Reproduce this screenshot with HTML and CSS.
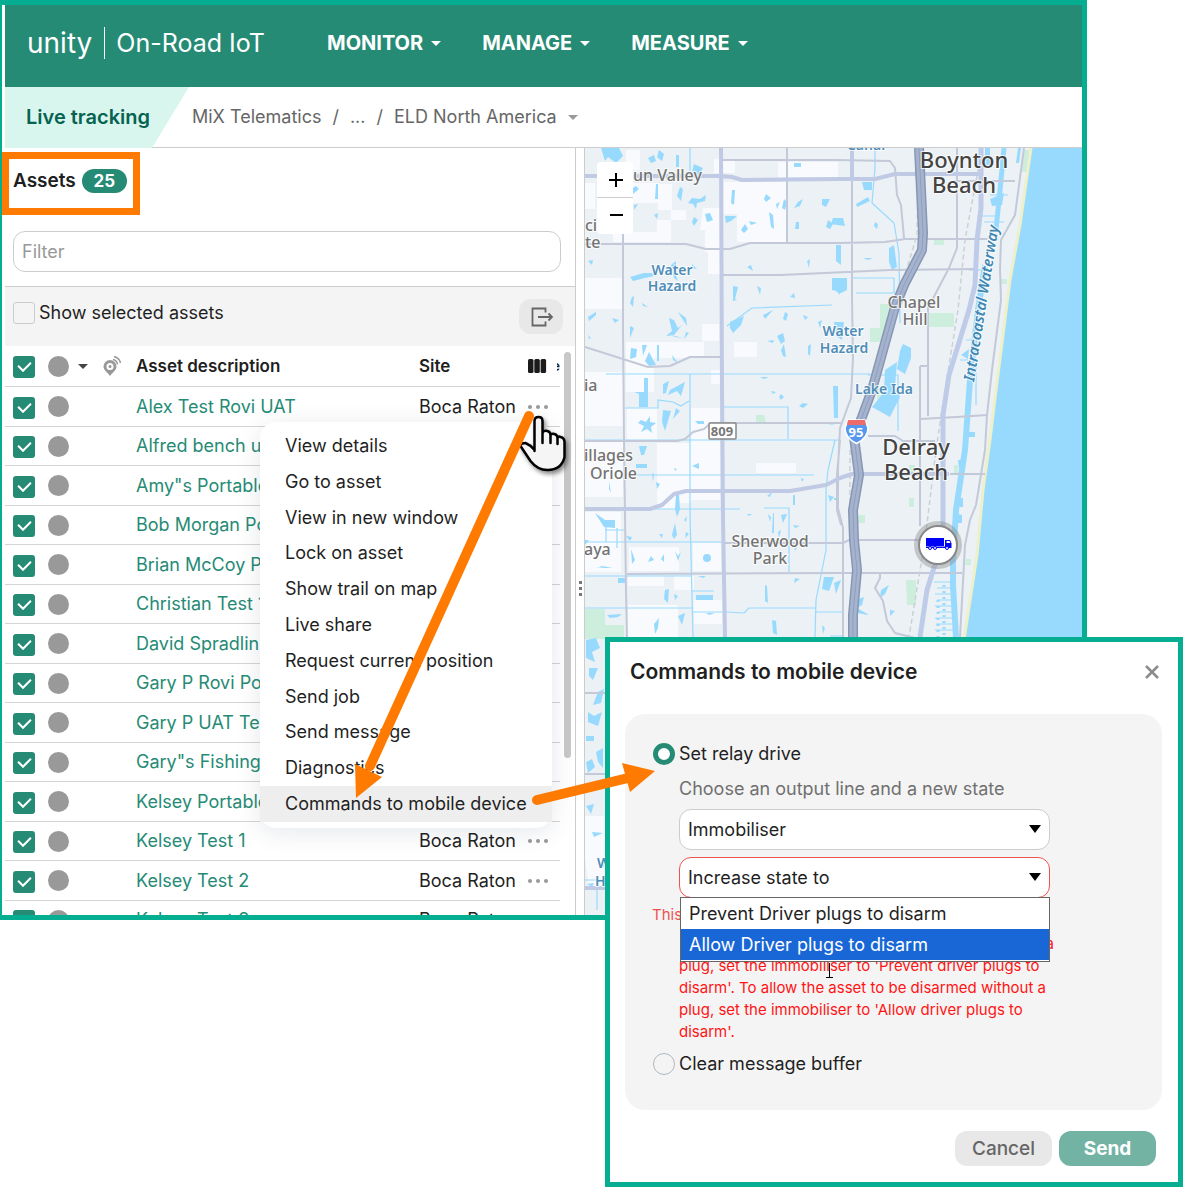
FILE: index.html
```html
<!DOCTYPE html>
<html lang="en">
<head>
<meta charset="utf-8">
<title>Live tracking</title>
<link rel="stylesheet" href="styles.css">
</head>
<body>
<div class="app">
  <header class="topbar">
    <div class="brand"><span class="brand-name">unity</span><span class="brand-product">On-Road IoT</span></div>
    <nav class="main-nav">
      <button type="button">MONITOR<i class="caret"></i></button>
      <button type="button">MANAGE<i class="caret"></i></button>
      <button type="button">MEASURE<i class="caret"></i></button>
    </nav>
  </header>
  <div class="crumb-bar">
    <h1 class="page-tab">Live tracking</h1>
    <nav class="crumbs"><a href="#">MiX Telematics</a><span>/</span><a href="#">...</a><span>/</span><a href="#">ELD North America</a><i class="caret"></i></nav>
  </div>
  <main class="workspace">
    <section class="assets">
      <div class="assets-head"><h2>Assets</h2><span class="count">25</span></div>
      <div class="filter-row"><input class="filter" type="text" placeholder="Filter" aria-label="Filter"></div>
      <div class="toolbar">
        <label><input class="check" type="checkbox">Show selected assets</label>
        <button class="export" type="button" aria-label="Export">
          <svg width="24" height="20" viewBox="0 0 24 20" fill="none" stroke="#666" stroke-width="1.8"><path d="M16.500 5.500V1.500H3.500v17H16.500V14.500M9 10H23M19.500 6.500L23 10l-3.500 3.500"/></svg>
        </button>
      </div>
      <div class="list">
        <table>
          <colgroup><col class="c-check"><col class="c-status"><col class="c-name"><col class="c-site"><col class="c-more"></colgroup>
          <thead>
            <tr>
              <th><input class="check" type="checkbox" checked aria-label="Select all"></th>
              <th><div class="status-head"><i class="dot"></i><i class="caret"></i>
                <svg width="20" height="22" viewBox="0 0 20 22"><path fill="#999" fill-rule="evenodd" d="M8 5a6.500 6.500 0 0 0-6.500 6.500C1.500 15 5 17 8 21c3-4 6.500-6 6.500-9.500A6.500 6.500 0 0 0 8 5zm0 3a3.500 3.500 0 1 1 0 7 3.500 3.500 0 0 1 0-7z"/><circle cx="8" cy="11.500" r="1.500" fill="#999"/><path fill="none" stroke="#999" stroke-width="1.500" d="M11 4.500q4 1 4.500 5M12 1.500q5.500 1.500 6.500 6.500"/></svg></div></th>
              <th>Asset description</th>
              <th>Site</th>
              <th><div class="cols"><svg width="20" height="16" viewBox="0 0 20 16" fill="#1b1b1b"><rect x="1" y="1" width="5.500" height="14" rx="1.500"/><rect x="7.300" y="1" width="5.500" height="14" rx="1.500"/><rect x="13.600" y="1" width="5.500" height="14" rx="1.500"/></svg><span class="cut">e</span></div></th>
            </tr>
          </thead>
          <tbody>
            <tr><td><input class="check" type="checkbox" checked aria-label="Select"></td><td><i class="dot"></i></td><td><a href="#">Alex Test Rovi UAT</a></td><td>Boca Raton</td><td><button class="more" type="button" aria-label="More"></button></td></tr>
            <tr><td><input class="check" type="checkbox" checked aria-label="Select"></td><td><i class="dot"></i></td><td><a href="#">Alfred bench u</a></td><td></td><td></td></tr>
            <tr><td><input class="check" type="checkbox" checked aria-label="Select"></td><td><i class="dot"></i></td><td><a href="#">Amy"s Portable</a></td><td></td><td></td></tr>
            <tr><td><input class="check" type="checkbox" checked aria-label="Select"></td><td><i class="dot"></i></td><td><a href="#">Bob Morgan Po</a></td><td></td><td></td></tr>
            <tr><td><input class="check" type="checkbox" checked aria-label="Select"></td><td><i class="dot"></i></td><td><a href="#">Brian McCoy P</a></td><td></td><td></td></tr>
            <tr><td><input class="check" type="checkbox" checked aria-label="Select"></td><td><i class="dot"></i></td><td><a href="#">Christian Test 1</a></td><td></td><td></td></tr>
            <tr><td><input class="check" type="checkbox" checked aria-label="Select"></td><td><i class="dot"></i></td><td><a href="#">David Spradlin</a></td><td></td><td></td></tr>
            <tr><td><input class="check" type="checkbox" checked aria-label="Select"></td><td><i class="dot"></i></td><td><a href="#">Gary P Rovi Po</a></td><td></td><td></td></tr>
            <tr><td><input class="check" type="checkbox" checked aria-label="Select"></td><td><i class="dot"></i></td><td><a href="#">Gary P UAT Tes</a></td><td></td><td></td></tr>
            <tr><td><input class="check" type="checkbox" checked aria-label="Select"></td><td><i class="dot"></i></td><td><a href="#">Gary"s Fishing</a></td><td></td><td></td></tr>
            <tr><td><input class="check" type="checkbox" checked aria-label="Select"></td><td><i class="dot"></i></td><td><a href="#">Kelsey Portable</a></td><td></td><td></td></tr>
            <tr><td><input class="check" type="checkbox" checked aria-label="Select"></td><td><i class="dot"></i></td><td><a href="#">Kelsey Test 1</a></td><td>Boca Raton</td><td><button class="more" type="button" aria-label="More"></button></td></tr>
            <tr><td><input class="check" type="checkbox" checked aria-label="Select"></td><td><i class="dot"></i></td><td><a href="#">Kelsey Test 2</a></td><td>Boca Raton</td><td><button class="more" type="button" aria-label="More"></button></td></tr>
            <tr><td><input class="check" type="checkbox" checked aria-label="Select"></td><td><i class="dot"></i></td><td><a href="#">Kelsey Test 3</a></td><td>Boca Raton</td><td><button class="more" type="button" aria-label="More"></button></td></tr>
          </tbody>
        </table>
        <div class="scrollbar"></div>
        <ul class="menu" role="menu">
          <li role="menuitem">View details</li>
          <li role="menuitem">Go to asset</li>
          <li role="menuitem">View in new window</li>
          <li role="menuitem">Lock on asset</li>
          <li role="menuitem">Show trail on map</li>
          <li role="menuitem">Live share</li>
          <li role="menuitem">Request current position</li>
          <li role="menuitem">Send job</li>
          <li role="menuitem">Send message</li>
          <li role="menuitem">Diagnostics</li>
          <li role="menuitem" class="active">Commands to mobile device</li>
        </ul>
      </div>
    </section>
    <div class="splitter"><i></i><i></i><i></i></div>
    <section class="map">
      <svg class="map-art" viewBox="585 148 497 767" preserveAspectRatio="xMinYMin slice">
        <rect x="585" y="148" width="600" height="767" fill="#ebf1f4"/>
        <!-- built-up blocks -->
        <path fill="#f9fafd" d="M714 159h21v14h-21zM778 162h60v15h-60zM724 182h63v60h-50v-28h-13zM627 183h32v20h-32zM658 184h14v26h-14zM703 208h18v44h-16v-22h-5zM657 220h29v-10h-15v32h-58v-10h44zM585 183h10v26h-10zM626 150h14v20h-14zM585 278h38v31h-38zM708 250h13v24h-13zM702 324h17v17h-17zM734 342h23v15h-23zM626 342h78v16h-50v34h-28zM711 370h9v14h-9zM585 372h38v54h-38zM691 408h29v92h-29zM627 408h30v32h-30zM657 443h34v60h-34zM585 441h38v56h-38zM585 512h36v60h-36zM657 475h20v34h-20zM756 463h40v10h-40zM693 543h28v28h-28zM629 547h50v24h-50zM628 605h50v32h-50zM694 600h28v24h-28zM628 576h36v10h-36zM674 576h20v14h-20zM585 816h20v72h-16l-4-30z"/>
        <!-- parks -->
        <path fill="#cdeedd" d="M585 609h20v16h19v14h-39zM880 304h10v38h-20v-14h10zM928 313h26v14h-26zM934 238h10v7h-10zM756 415h8l2 7h-10zM906 580h10v25h-9zM909 498h5v9h-5zM857 515h8v8h-9zM1024 150h8l-5 22h-6zM1001 279h6v5h-6zM876 385h14v22h-12zM909 465h6v8h-6zM954 465h4v8h-4zM966 559h5v6h-6z"/>
        <!-- sea and beach -->
        <path fill="#98dafe" d="M1031 148L1020 225 1010 280 996 390 990 440 983 490 977 555 965 637V915H1190V148z"/>
        <path fill="none" stroke="#eef0c9" stroke-width="3" d="M1031 148L1020 225 1010 280 996 390 990 440 983 490 977 555 964 640"/>
        <!-- canals -->
        <g fill="none" stroke="#98dafe">
          <path stroke-width="1.200" d="M606 374H870M585 440H840M634 475H814M655 509h85M764 508h25v64M585 542H723M585 576h107M692 591h22M585 608h107M692 612h34l18 1 5-5h67M690 148v24M690 374v140l3 123M625 408h33v-8l15 2 8 4 8-5M722 407h66v32M835 440l-7 30-2 20v60l-10 50-1 37M815 612h28M727 326l25-18 80-3M875 148v20l-3 35 22 20 5 30 1 70M853 278h41v15h-38M830 636h14M605 530h20M606 520v22M617 548v-20M585 880h20M597 890v20M868 375h30v56M976 405v-40M834 424h-5"/>
          <path stroke-width="5" d="M1004 148l-3 32-5 50"/>
          <path stroke-width="6" d="M985 265l-7 45-8 70-5 70-9 60-3 50v25l3 52"/>
          <path stroke-width="3" stroke-dasharray="2 4" d="M944 585v50M938 600v37"/>
          <path stroke-width="1" d="M934 582h20M937 588h17M935 594h18M937 600h17M935 606h18M937 612h16M935 618h18M936 624h17M935 630h18M984 222h20M982 216h16M990 195h18M972 290h14M966 340h14M969 270h14M960 360h12"/>
        </g>
        <!-- lakes and ponds -->
        <path fill="#98dafe" d="M601 148h18l4 8-7 7-8-6-3 4zM648 158l6-3 2 6-5 2zM659 150l5 4-2 7-5-4zM676 155h3v12h-3zM694 164l9 4-5 9-6-5zM631 189l5-3 3 3-6 5zM656 184h2v15h-3zM680 187l3 2-2 12-4-5zM692 198l8 1 6-4-1 6-8 2-1 6-3-5-5-1zM654 215l4-2-1 6zM634 205l4-1-4 6zM705 214l5-1 3 7-6 2zM694 217l4 3-4 6-2-4zM732 190h3l-1 15-3-2zM725 216h12l-6 5-5 2zM766 194l5 4-5 4-2-3zM776 204l4-2-3 7zM769 212l4 3 1 14-3-2zM749 221l8 2-6 2zM784 199l3 3-2 8-3-2zM794 163h7v4h-7zM798 202l5-3-3 7-6 2zM822 199h8l-4 8-4-2zM828 220l5 4-3 5-4-2zM796 222h3v7h-4zM588 261l5-1-1 5zM630 277l14-4h8l2 3-9 2-12 3zM671 265l5-4v15l2 5-4-3zM692 264l5 5-5-1zM747 267l4-2 2 6zM807 261l3-2-1 9zM741 230l4-6 3 5-4 4zM733 286l5 1-3 12 2 1-4 1zM757 286l4 2-1 7zM790 297l4-4 1 5zM832 280h8v15l-4-4-4-1zM836 245h5v20l-5-4zM588 317l8-5v3l-7 6zM612 318l7 2-4 3zM630 326l4 2-4 10zM669 318l5 2 4 8 4-3-8 10-8 1 6-5zM678 312l8 6 1 8-4-6zM632 297l2-1-1 11-3-4zM642 303l6 4-5-1zM671 335l12 3-8-1zM686 332l3 1-5 6zM588 335l3 3-2 1zM631 348l6 1-1 8-6 2zM642 345h5l-4 11zM649 352l7 13-7 1-4-5zM657 345h2v16h-2zM672 355l6 8-5-3zM730 322l14-6-3 9-8 8-3-5zM763 315l10-5-8 9zM785 312l3 2-2 7-3-2zM803 315l5 2-3 3zM818 322l4-2-2 8zM777 336l6-3 2 8-4 3zM808 346l3-2-1 12-2-2zM781 350l3-6 2 13-3-1zM773 343l-6-2 7-1zM760 377h9l-5 2zM644 378h4v29h-9v-13l-5-2h10zM663 384l6-3-3 12-3 1zM670 390l15-8-4 14-4-5-9 4zM833 386h5v32h-4zM771 391l5 1-3 2zM781 394l3 3-3 3-2-3zM803 403l5 1-5 4-4-2zM641 420l5 2 4-6v6l6 1-5 4 1 6-5-4-6 3 3-6-6-3zM663 410l8 1-6 20-3-9zM676 408l4 3-7 8zM695 421h9v3h-6zM639 446h8l-3 9h-3zM636 464h11v4h-11zM692 466l7-3v6zM674 468l3 1-2 2zM656 482l4 2-3 5zM609 481l2 12-2-4zM652 473l2 1-1 8zM676 495h3l1 14-3 8-2-8zM595 513l10 7h10v8l-11-1zM672 535l3-12 2 12-3 4zM659 534h4l-1 4zM684 520l3-4-1 6zM686 532l3 2-4 4zM626 536l6 1-2 4zM747 514h5l-3 2zM768 514l3 3-1 5zM773 513h1v20h-2zM781 515l6-1-4 9zM778 532l3-2-2 8zM767 496l5-4-2 5zM793 495h2v10h-2zM828 495l6 2-4 5zM801 478l3 1-2 3zM793 525l7 1-5 2zM794 545l5-2-4 8zM585 540h4l-4 5zM595 567h12l6 1h-8zM618 578h7v5h-7zM665 590l4-1-1 14-4-4zM674 594l4 2-3 4zM696 595h17v5h-17zM698 576h8l-3 2zM765 585l2 1 1 17-3-2zM824 577h10l-5 14-7-2zM795 578l5 1-6 4zM772 620l4 1 1 14-4-2zM607 615l15-1-4 3-8 1zM654 624l5-6-1 10-3 6zM678 616l7-3-3 12zM706 613h9l-6 2zM822 625l3 3-2 6zM631 549l4 11-3 4zM651 556l3 4-6 2zM664 554v8l-3-3zM675 551l3 5 3-4-3 9zM707 554a3 3 0 1 1 0 8 3 3 0 0 1 0-8zM600 566h8l-7 1zM862 182h10v8h-8zM856 204l12-7 2 4-13 6zM875 222l3 2-1 5-3-3zM833 218h10l2 8-14-2zM863 258h10l-5 2zM832 278h15v12l-8 4-7-9zM889 248l5-3 3 22-5 3-3-8zM834 322h10l-2 18-6-4zM903 344l8 4v10l-6 16-8-5 3-18zM885 370l12-8-2 25 5 10-10 20-18-10 12-15zM990 199l14-6-2 12-10 1zM961 355l8-6-1 10zM968 432h7v5h-7zM955 498h8v9h-7zM954 513l8 2v8h-9zM958 460h7v8h-6zM985 148h5v18h-5zM1018 148h3l-2 15h-3zM834 583l7-3-5 14zM881 590l8-5-4 9-5 4zM890 610l5 1-5 5zM856 600l8-3-2 8-5 3 12 7-12-2zM834 498h5v2h-5zM586 640l10-2 4 10-8 4 3 10-9-4zM589 668h9l-5 12-4-4zM598 692l6-3-3 14-8 2zM588 712l6 4 8-4-4 14-10-4zM586 736h8v5h-8zM596 752l7-4v20l-5-6zM586 762l6-3 3 8-7 6zM590 783l9 3-9 3zM586 806l8-2-3 10zM592 832l11 1-9 4zM601 862h3v5h-3zM587 884l7-1-2 4z"/>
        <!-- streets -->
        <g fill="none" stroke="#c3c9d8" stroke-width="2" stroke-linejoin="round">
          <path d="M623 230v100l1 110 2 150 1 50M787 148v95M585 244h101l20 5h24l20-6h90l45-1 20-3h85M721 275h60l109-5 85-1M721 160h115l54 1 5 7 2 27 4 10 3 33M585 347l63 20 22-1 20-9h30M852 148v150l1 60-2 40-11 30-2 40v40l5 20v110M957 148v100l-8 20-21 40v108M585 441h92l8-2 8-7 11-3 7-6h130M868 436h27l8 5h32M920 419l37-2 30-2M953 181h62M920 366h9M920 366v160M627 574l213-1h122M723 543h120l6-3h86M950 474h35M880 573v5l-5 10 8 13 4 20 8 12 20 5M840 440l-3 35v35l4 15M1024 148l-9 67-14 25-1 30 1 30-9 70-5 45-2 35-9 55-6 15-5 25-5 92M585 693h20M585 774h20"/>
          <path stroke="#cdd0d6" stroke-width="1.500" stroke-dasharray="5 3" d="M980 160l-15 80-7 70-13 80-9 60-11 90-16 97M919 150l-2 85-9 30-10 30M850 450v60"/>
        </g>
        <g fill="none" stroke="#bfcce9" stroke-width="4" stroke-linejoin="round">
          <path stroke="#c0cae5" d="M585 176h135l12 1 10 3 98-1h35l20-5h85M721 148l1 242 1 130 2 117M852 148v32M585 509h65l12-4 12-11 12-3h104l36-6 14-7 12-4h97M585 888h20"/>
          <path stroke-width="5" d="M981 148v60l-4 32-2 45-6 25-20 65-6 40v110l-5 30-11 35-7 47"/>
        </g>
        <g fill="none" stroke-linejoin="round">
          <path stroke="#8796b1" stroke-width="10" d="M919 148l4 85-1 17-18 35-9 22-23 83-10 27-8 20 5 38-6 35 1 30 3 30-4 45v30"/>
          <path stroke="#a5b3cf" stroke-width="7" d="M919 148l4 85-1 17-18 35-9 22-23 83-10 27-8 20 5 38-6 35 1 30 3 30-4 45v30"/>
          <path stroke="#8f9fbd" stroke-width="1" d="M919 148l4 85-1 17-18 35-9 22-23 83-10 27-8 20 5 38-6 35 1 30 3 30-4 45v30"/>
        </g>
        <!-- road shields -->
        <rect x="709" y="423" width="27" height="16" rx="1" fill="#fff" stroke="#888" stroke-width="1.500"/>
        <text class="shield" x="722" y="436">809</text>
        <path fill="#5597ee" stroke="#fff" stroke-width="1.500" d="M848 420h17l3 8q0 10-11.500 15.500Q845 438 845 428z"/>
        <path fill="#ee6b6b" d="M848 420h17l1 5h-19z"/>
        <text class="shield white" x="856" y="437">95</text>
        <!-- place names -->
        <g class="town"><text x="964" y="168">Boynton</text><text x="964" y="193">Beach</text><text x="916" y="455">Delray</text><text x="916" y="480">Beach</text></g>
        <g class="area"><text x="914" y="308">Chapel</text><text x="915" y="325">Hill</text><text x="770" y="547">Sherwood</text><text x="770" y="564">Park</text></g>
        <g class="area start"><text x="633" y="181">un Valley</text><text x="585" y="231">ci</text><text x="585" y="248">te</text><text x="584" y="391">ia</text><text x="584" y="461">illages</text><text x="590" y="479">Oriole</text><text x="584" y="555">aya</text></g>
        <g class="water"><text x="672" y="275">Water</text><text x="672" y="291">Hazard</text><text x="843" y="336">Water</text><text x="844" y="353">Hazard</text><text x="884" y="394">Lake Ida</text><text x="866" y="150">Canal</text></g>
        <g class="water start"><text x="597" y="868">W</text><text x="595" y="886">H</text></g>
        <text class="waterway" transform="translate(974 382) rotate(-81)">Intracoastal Waterway</text>
        <!-- vehicle marker -->
        <circle cx="938" cy="545" r="24" fill="#888" fill-opacity=".4"/>
        <circle cx="938" cy="545" r="19" fill="#fff" stroke="#888" stroke-width="2"/>
        <path fill="#0000f5" d="M926 538h18v8h-18zM945 540h5l1.500 3v5H926v-1.500h19z"/>
        <path fill="#fff" d="M946.500 541h3l1 2h-4z"/>
        <g fill="#fff" stroke="#0000f5"><circle cx="930" cy="548" r="1.500"/><circle cx="935" cy="548" r="1.500"/><circle cx="947" cy="548" r="1.500"/></g>
      </svg>
      <div class="zoom"><button type="button" aria-label="Zoom in"><svg width="16" height="16" viewBox="0 0 16 16" stroke="#000" stroke-width="2"><path d="M2 8h14M9 1v14"/></svg></button><button type="button" aria-label="Zoom out"><svg width="16" height="16" viewBox="0 0 16 16" stroke="#000" stroke-width="2"><path d="M3 7h13"/></svg></button></div>
    </section>
  </main>
</div>

<form class="dialog" role="dialog" aria-labelledby="dlg-title">
  <div class="dialog-head"><h2 id="dlg-title">Commands to mobile device</h2>
    <button class="close" type="button" aria-label="Close"><svg width="16" height="16" viewBox="0 0 16 16" stroke="#8c8c8c" stroke-width="2.500"><path d="M2 2l12 12M14 2l-12 12"/></svg></button></div>
  <div class="panel">
    <label class="radio-row"><input type="radio" name="cmd" checked>Set relay drive</label>
    <div class="fields">
      <p class="hint">Choose an output line and a new state</p>
      <div class="select"><select aria-label="Output line"><option>Immobiliser</option></select></div>
      <div class="select invalid"><select aria-label="New state"><option>Increase state to</option></select>
        <ul class="options" role="listbox"><li role="option">Prevent Driver plugs to disarm</li><li role="option" aria-selected="true">Allow Driver plugs to disarm</li></ul>
      </div>
    </div>
    <p class="error">This</p>
    <p class="warning"><span>a</span>plug, set the immobiliser to 'Prevent driver plugs to<br>disarm'. To allow the asset to be disarmed without a<br>plug, set the immobiliser to 'Allow driver plugs to<br>disarm'.</p>
    <label class="radio-row"><input type="radio" name="cmd">Clear message buffer</label>
  </div>
  <div class="actions"><button class="cancel" type="button">Cancel</button><button class="send" type="submit">Send</button></div>
</form>

<svg class="callouts" width="1183" height="1187" viewBox="0 0 1183 1187" aria-hidden="true">
  <rect x="5.500" y="155.500" width="131" height="56" fill="none" stroke="#ff7a00" stroke-width="7"/>
  <g filter="drop-shadow(2px 3px 2px rgba(0,0,0,.45))"><path fill="#f5f5f5" stroke="#000" stroke-width="2.500" stroke-linejoin="round" d="M534.500 451V421q0-4 4-4t4 4V443V433q1-3 5-2 3 1 3 4v8-8q1-2 4-1 3 1 3 4v6-6q1-2 3-1 4 1 4 5v15q-3 13-17 13-10 0-17-9l-10-15q0-3 5-3 5 2 9 7z"/></g>
  <g fill="none" stroke="#ff7a00" stroke-width="10" stroke-linecap="round"><path d="M529 416L370 766"/><path d="M537 800L628 778"/></g>
  <path fill="#ff7a00" d="M355 764l27 13-26 21zM622 763l33 8-25 21z"/>
  <path fill="none" stroke="#000" d="M826 977.500h7M829.500 963v14"/>
</svg>
</body>
</html>
```
FILE: styles.css
```css
* { box-sizing: border-box; }
body { margin: 0; min-height: 100vh; position: relative; background: #fff; color: #1f1f1f; font: 18px/24px Inter, "Liberation Sans", sans-serif; overflow: hidden; }
h1, h2, p, ul { margin: 0; padding: 0; }
ul { list-style: none; }
button, input, select { font: inherit; color: inherit; margin: 0; }
button { border: 0; padding: 0; background: none; }
a { color: inherit; text-decoration: none; }
.caret { display: inline-block; border: 5px solid transparent; border-top-color: currentColor; border-bottom: 0; }

.app { margin-right: 96px; height: calc(100vh - 267px); border: 5px solid #06ae91; border-left-width: 2px; padding-left: 3px; display: flex; flex-direction: column; overflow: hidden; }
.topbar { height: 82px; flex: none; background: #268b75; color: #fff; display: flex; align-items: flex-start; padding: 21px 22px; }
.brand { display: flex; align-items: center; font-size: 25px; line-height: 34px; width: 300px; }
.brand-name { font-size: 28px; line-height: 32px; border-right: 1px solid #fff; padding-right: 12px; margin-right: 11px; }
.main-nav { display: flex; gap: 41px; font-size: 20px; line-height: 34px; font-weight: 700; }
.main-nav .caret { margin: 0 0 4px 8px; }
.crumb-bar { height: 61px; flex: none; display: flex; border-bottom: 1px solid #ccc; }
.page-tab { width: 184px; height: 61px; padding-left: 21px; background: #d8f5ee; clip-path: polygon(0 0, 100% 0, 147px 100%, 0 100%); color: #066350; font-size: 20px; line-height: 60px; font-weight: 600; }
.crumbs { display: flex; align-items: center; gap: 11px; padding-left: 3px; color: #666; }
.crumbs .caret { color: #999; }

.workspace { flex: 1; min-height: 0; display: flex; }
.assets { width: 571px; flex: none; border-right: 1px solid #ccc; display: flex; flex-direction: column; }
.assets-head { height: 83px; padding: 21px 8px; display: flex; align-items: flex-start; gap: 6px; }
.assets-head h2 { font-size: 19px; line-height: 24px; font-weight: 600; }
.count { width: 45px; border-radius: 12px; background: #268b75; color: #fff; text-align: center; font-size: 17px; font-weight: 700; }
.filter-row { padding: 0 14px 14px 8px; }
.filter { display: block; width: 100%; height: 41px; border: 1px solid #ccc; border-radius: 12px; padding: 0 8px; }
.filter::placeholder { color: #999; opacity: 1; }
.toolbar { height: 60px; flex: none; background: #f4f4f4; border-top: 1px solid #ccc; display: flex; justify-content: space-between; align-items: flex-start; padding: 12px 12px 0 8px; }
.toolbar label { display: flex; align-items: center; gap: 4px; padding-top: 2px; }
.export { width: 44px; height: 35px; border-radius: 12px; background: #e8e8e8; display: grid; place-items: center; }
.check { appearance: none; width: 22px; height: 22px; border: 1px solid #ccc; border-radius: 3px; display: block; }
.check:checked { border: 0; background: #268b75; display: grid; place-items: center; }
.check:checked::after { content: ""; width: 12px; height: 7px; border: solid #fff; border-width: 0 0 3px 3px; border-radius: 1px; transform: rotate(-45deg) scale(.85); margin-bottom: 4px; }
.dot { display: block; width: 21px; height: 21px; border-radius: 50%; background: #999; }

.list { position: relative; flex: 1; min-height: 0; }
.list table { width: 555px; table-layout: fixed; border-collapse: separate; border-spacing: 0; text-align: left; }
.c-check { width: 43px; } .c-status { width: 88px; } .c-name { width: 283px; } .c-site { width: 108px; } .c-more { width: 33px; }
.list th, .list td { padding: 0; height: 40px; border-bottom: 1px solid #d4d4d4; vertical-align: middle; white-space: nowrap; }
.list th { height: 41px; font-size: 17px; font-weight: 600; }
.list tbody tr:nth-child(even) td { height: 39px; }
.list td:first-child, .list th:first-child { padding: 2px 0 0 8px; }
.list td a { color: #268b75; }
.status-head { display: flex; align-items: center; }
.status-head .caret { margin: 0 14px 0 9px; color: #444; }
.cols { display: flex; align-items: center; justify-content: space-between; overflow: hidden; }
.cut { width: 3px; overflow: hidden; direction: rtl; font-size: 14px; }
.more { display: block; width: 4px; height: 4px; margin-left: 9px; border-radius: 50%; background: #999; box-shadow: -8px 0 #999, 8px 0 #999; }
.scrollbar { position: absolute; top: 6px; right: 4px; width: 7px; height: 406px; border-radius: 4px; background: #c8c8c8; }
.menu { position: absolute; top: 76px; left: 255px; width: 292px; height: 406px; padding: 6px 0; display: grid; grid-auto-rows: 1fr; background: #fff; border-radius: 16px; box-shadow: 0 4px 24px rgba(40, 60, 90, .12); }
.menu li { padding-left: 25px; display: flex; align-items: center; }
.menu .active { background: #eee; }
.splitter { width: 9px; flex: none; border-right: 1px solid #ccc; display: flex; flex-direction: column; align-items: center; justify-content: center; gap: 3px; padding-top: 114px; }
.splitter i { width: 3px; height: 3px; background: #777; }

.map { position: relative; flex: 1; min-width: 0; overflow: hidden; background: #ebf1f4; }
.map-art { display: block; width: 100%; height: 100%; }
.map text { font-family: "Noto Sans", sans-serif; text-anchor: middle; stroke: #fff; stroke-width: 2px; paint-order: stroke; stroke-opacity: .8; }
.town { font-size: 22px; font-weight: 500; fill: #444; }
.area { font-size: 16px; font-weight: 500; fill: #737373; }
.water { font-size: 14px; font-weight: 600; fill: #4f8db8; }
.map .start text { text-anchor: start; }
.map .waterway { font-size: 15px; font-weight: 600; font-style: italic; fill: #4087b3; text-anchor: start; }
.map .shield { font-size: 13px; font-weight: 700; fill: #777; stroke: none; }
.map .white { fill: #fff; }
.zoom { position: absolute; top: 14px; left: 12px; width: 36px; border-radius: 4px; background: #fff; overflow: hidden; }
.zoom button { display: grid; place-items: center; width: 100%; height: 36px; }
.zoom button:first-child { border-bottom: 1px solid #ccc; }

.dialog { position: absolute; right: 0; bottom: 0; width: 578px; padding: 20px 16px 16px 15px; border: 5px solid #06ae91; background: #fff; }
.dialog-head { display: flex; justify-content: space-between; align-items: center; padding: 0 2px 0 5px; height: 20px; }
.dialog-head h2 { font-size: 21px; line-height: 24px; font-weight: 600; }
.close { display: grid; }
.panel { margin-top: 32px; padding: 28px 28px 34px; height: 396px; border-radius: 20px; background: #f4f4f4; }
.radio-row { display: flex; align-items: center; gap: 4px; }
.radio-row input { appearance: none; width: 22px; height: 22px; border: 1px solid #b0b7c0; border-radius: 50%; }
.radio-row input:checked { border: 5px solid #268b75; background: #fff; }
.fields { margin-left: 26px; width: 371px; }
.hint { color: #707070; padding: 11px 0 8px; }
.select { position: relative; margin-bottom: 7px; }
.select select { appearance: none; display: block; width: 100%; height: 41px; padding: 0 8px; border: 1px solid #ccc; border-radius: 12px; background: #fff; }
.select::after { content: ""; position: absolute; top: 16px; right: 9px; border: 6px solid transparent; border-top: 8px solid #000; border-bottom: 0; }
.invalid select { border-color: #ef5350; }
.options { position: absolute; z-index: 1; top: 40px; left: 1px; right: 0; border: 1px solid #666; padding-bottom: 1px; background: #fff; }
.options li { padding-left: 8px; line-height: 31px; }
.options [aria-selected] { background: #1967d6; color: #fff; }
.error { color: #ef5350; font-size: 15px; line-height: 22px; margin: -1px 0 7px -1px; }
.warning { margin-left: 26px; width: 375px; color: #ff1414; font-size: 15px; line-height: 22px; white-space: nowrap; }
.warning span { display: block; text-align: right; }
.warning + .radio-row { margin-top: 9px; }
.actions { display: flex; justify-content: flex-end; gap: 7px; padding: 21px 6px 0 0; }
.actions button { width: 97px; height: 35px; border-radius: 12px; font-size: 19px; font-weight: 500; }
.cancel { background: #e8e8e8; color: #666; }
.actions .send { background: #72b3a4; color: #fff; font-weight: 700; }
.callouts { position: absolute; top: 0; left: 0; pointer-events: none; }
```
